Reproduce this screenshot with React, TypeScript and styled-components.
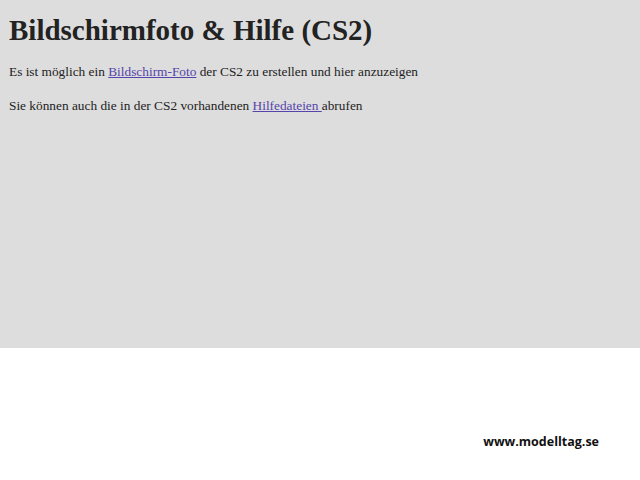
import React from 'react'
import styled, { createGlobalStyle } from 'styled-components'

const GlobalStyle = createGlobalStyle`
    html, body {
        margin: 0;
        padding: 0;
        background: #ffffff;
    }
`

const Page = styled.div`
    width: 640px;
    height: 480px;
    display: flex;
    flex-direction: column;
`

const Content = styled.section`
    height: 348px;
    box-sizing: border-box;
    background: #dddddd;
    padding: 14px 9px 0;
    font-family: "Liberation Serif", "Times New Roman", serif;
    color: #222222;
`

const Title = styled.h1`
    margin: 0 0 18px;
    font-size: 29px;
    line-height: 32px;
    font-weight: 700;
`

const Line = styled.p`
    margin: 0 0 19px;
    font-size: 13.33px;
    line-height: 15px;
`

const Link = styled.a`
    color: #5544aa;
    text-decoration: underline;
`

const Footer = styled.footer`
    flex: 1;
    display: flex;
    justify-content: flex-end;
    align-items: flex-start;
    padding: 85px 41px 0 0;
`

const Site = styled.span`
    font-family: "Open Sans", "DejaVu Sans", sans-serif;
    font-weight: 700;
    font-size: 12.5px;
    color: #111111;
`

const App: React.FC = () => {
    return (
        <Page>
            <GlobalStyle />
            <Content>
                <Title>Bildschirmfoto &amp; Hilfe (CS2)</Title>
                <Line>
                    Es ist möglich ein <Link href="#">Bildschirm-Foto</Link> der CS2 zu erstellen und hier anzuzeigen
                </Line>
                <Line>
                    Sie können auch die in der CS2 vorhandenen <Link href="#">Hilfedateien </Link>abrufen
                </Line>
            </Content>
            <Footer>
                <Site>www.modelltag.se</Site>
            </Footer>
        </Page>
    )
}

export default App
